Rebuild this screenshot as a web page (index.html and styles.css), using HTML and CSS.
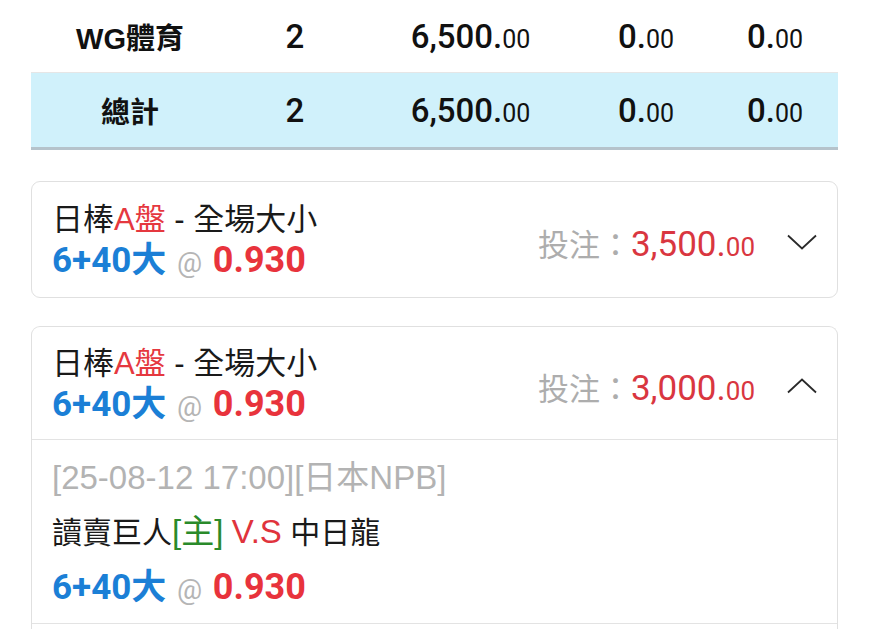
FILE: index.html
```html
<!DOCTYPE html>
<html lang="zh-Hant">
<head>
  <meta charset="UTF-8">
  <meta name="viewport" content="width=device-width, initial-scale=1.0">
  <title>注單明細</title>
  <link rel="stylesheet" href="styles.css">
</head>
<body>
  <div class="page">
    <div class="summary">
      <div class="row">
        <div class="cell">WG體育</div>
        <div class="cell num">2</div>
        <div class="cell num">6,500.<small>00</small></div>
        <div class="cell num">0.<small>00</small></div>
        <div class="cell num">0.<small>00</small></div>
      </div>
      <div class="row total">
        <div class="cell">總計</div>
        <div class="cell num">2</div>
        <div class="cell num">6,500.<small>00</small></div>
        <div class="cell num">0.<small>00</small></div>
        <div class="cell num">0.<small>00</small></div>
      </div>
    </div>

    <div class="bet">
      <div class="bet-head">
        <div class="bet-info">
          <div class="bet-title">日棒<span class="red">A盤</span> - 全場大小</div>
          <div class="pick"><span class="blue">6+40大</span> <span class="at">@</span> <span class="odds">0.930</span></div>
        </div>
        <div class="stake"><span class="label">投注：</span><span class="amount">3,500.<small>00</small></span></div>
        <svg class="chevron" viewBox="0 0 30 16" width="30" height="16">
          <polyline points="1,1.5 15,14.5 29,1.5" fill="none" stroke="#2a2a2a" stroke-width="1.8"/>
        </svg>
      </div>
    </div>

    <div class="bet open">
      <div class="bet-head">
        <div class="bet-info">
          <div class="bet-title">日棒<span class="red">A盤</span> - 全場大小</div>
          <div class="pick"><span class="blue">6+40大</span> <span class="at">@</span> <span class="odds">0.930</span></div>
        </div>
        <div class="stake"><span class="label">投注：</span><span class="amount">3,000.<small>00</small></span></div>
        <svg class="chevron" viewBox="0 0 30 16" width="30" height="16">
          <polyline points="1,14.5 15,1.5 29,14.5" fill="none" stroke="#2a2a2a" stroke-width="1.8"/>
        </svg>
      </div>
      <div class="bet-detail">
        <div class="match-time">[25-08-12 17:00][日本NPB]</div>
        <div class="teams">讀賣巨人<span class="green">[主]</span> <span class="vs">V.S</span> 中日龍</div>
        <div class="pick"><span class="blue">6+40大</span> <span class="at">@</span> <span class="odds">0.930</span></div>
      </div>
      <div class="bet-more"></div>
    </div>
  </div>
</body>
</html>
```

FILE: styles.css
```css
body {
  margin: 0;
  background: #ffffff;
  color: #1c1c1c;
  font-family: "Liberation Sans", "Noto Sans CJK TC", sans-serif;
}
.page {
  padding: 0 32px 0 31px;
}
.summary {
  margin-bottom: 31px;
}
.row {
  display: grid;
  grid-template-columns: 198px 132px 219px 132px 1fr;
  align-items: center;
  height: 72px;
  border-bottom: 1px solid #e6e6e6;
  font-size: 29px;
  font-weight: bold;
  color: #111;
}
.row.total {
  height: 74px;
  background: #d0f1fb;
  border-bottom: 3px solid #b5c3cb;
}
.cell {
  text-align: center;
}
.num {
  font-family: Roboto, "Liberation Sans", sans-serif;
  font-weight: 500;
  font-size: 33px;
}
.num small {
  font-size: 25px;
  font-weight: 400;
}
.bet {
  border: 1px solid #e0e0e0;
  border-radius: 9px;
  margin-bottom: 28px;
}
.bet.open {
  border-bottom: none;
  border-radius: 9px 9px 0 0;
}
.bet-head {
  display: flex;
  align-items: center;
  padding: 18px 20px 14px;
}
.open .bet-head {
  padding: 17px 20px 12px;
  border-bottom: 1px solid #e3e3e3;
}
.bet-info {
  flex: 1;
}
.bet-title {
  font-size: 31px;
  line-height: 40px;
  color: #1a1a1a;
}
.pick {
  font-size: 35px;
  line-height: 40px;
  font-family: Roboto, "Liberation Sans", "Noto Sans CJK TC", sans-serif;
}
.red {
  color: #e5383f;
}
.blue {
  color: #1b7fd6;
  font-weight: bold;
}
.at {
  color: #b5b5b5;
  font-size: 28px;
  margin: 0 2px;
}
.odds {
  color: #e8333c;
  font-weight: bold;
  font-size: 36px;
}
.stake {
  font-size: 31px;
  margin-top: 2px;
}
.stake .label {
  color: #adadad;
}
.stake .amount {
  color: #d93640;
  font-family: Roboto, "Liberation Sans", sans-serif;
  font-size: 35px;
}
.stake small {
  font-size: 26px;
}
.chevron {
  margin-left: 32px;
}
.bet-detail {
  padding: 18px 20px 13px;
  border-bottom: 1px solid #e3e3e3;
}
.match-time {
  font-size: 33px;
  line-height: 40px;
  color: #b3b3b3;
}
.teams {
  font-size: 30px;
  line-height: 40px;
  margin-top: 14px;
  color: #1a1a1a;
}
.teams .green,
.teams .vs {
  font-size: 33px;
}
.vs {
  color: #e0333c;
}
.green {
  color: #2a8a2a;
}
.bet-detail .pick {
  margin-top: 14px;
}
.bet-more {
  height: 40px;
}
```
